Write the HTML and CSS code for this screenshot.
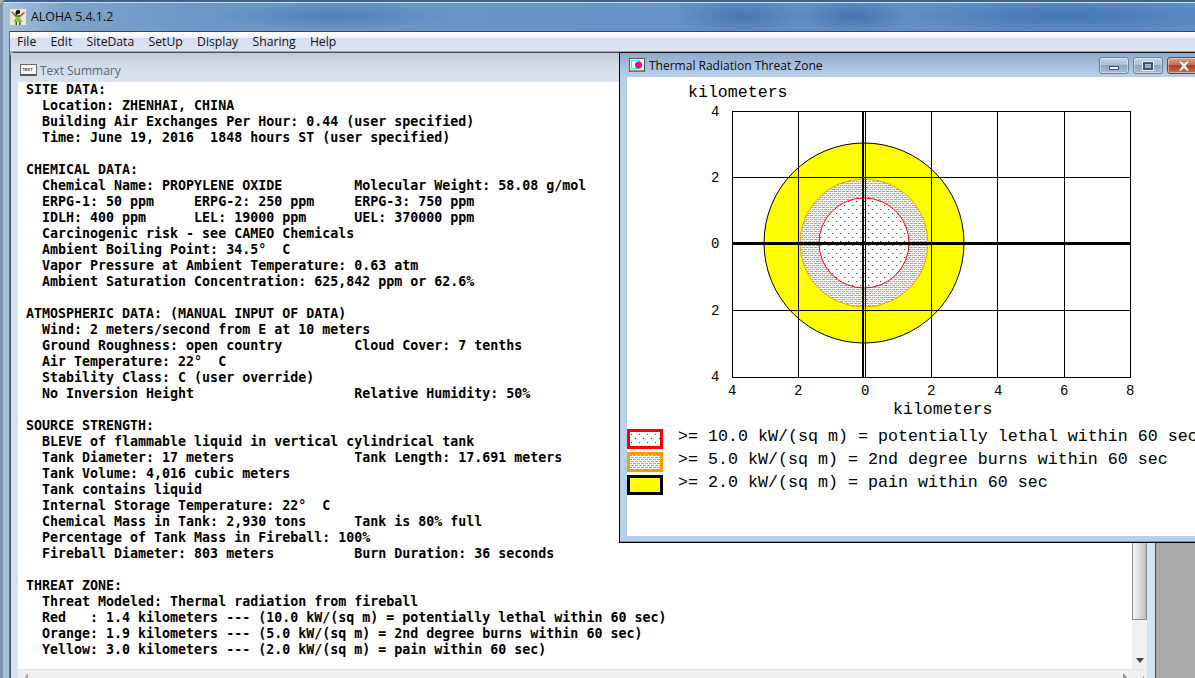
FILE: index.html
```html
<!DOCTYPE html>
<html lang="en">
<head>
<meta charset="utf-8">
<title>ALOHA 5.4.1.2</title>
<link rel="stylesheet" href="styles.css">
</head>
<body>
<div class="app">
  <header class="app-title">
    <svg class="hula" viewBox="0 0 16 16" width="16" height="16">
      <rect width="16" height="16" fill="#e6ebd2"/>
      <circle cx="8" cy="3" r="2.200" fill="#1d1a10"/>
      <rect x="5.500" y="3" width="1.500" height="4" fill="#1d1a10"/>
      <path d="M1 3 L2 2.500 L6 6 L10 6 L14 3 L15 4 L10 8.500 L6 8.500 Z" fill="#8a6a30"/>
      <path d="M3.500 13 L6 8.500 L10 8.500 L12.500 13 Z" fill="#7dc832"/>
      <rect x="5.500" y="13" width="1.500" height="3" fill="#6a4c18"/>
      <rect x="9" y="13" width="1.500" height="3" fill="#6a4c18"/>
    </svg>
    <span class="app-name">ALOHA 5.4.1.2</span>
  </header>
  <div class="app-body">
    <nav class="menu">
      <span>File</span><span>Edit</span><span>SiteData</span><span>SetUp</span><span>Display</span><span>Sharing</span><span>Help</span>
    </nav>
    <main class="mdi">
      <section class="text-win">
        <div class="text-title">
          <svg class="text-icon" viewBox="0 0 17 12" width="17" height="12">
            <rect x="0.500" y="0.500" width="16" height="10" fill="#f2f2f2" stroke="#6a6a6a"/>
            <rect x="1.500" y="1.500" width="14" height="7" fill="#fff"/>
            <text class="icon-label" x="2.500" y="6.500">TEXT</text>
            <rect x="0" y="10.500" width="17" height="1.500" fill="#555"/>
          </svg>
          <span>Text Summary</span>
        </div>
        <div class="text-client">
<pre class="report">SITE DATA:
  Location: ZHENHAI, CHINA
  Building Air Exchanges Per Hour: 0.44 (user specified)
  Time: June 19, 2016  1848 hours ST (user specified)

CHEMICAL DATA:
  Chemical Name: PROPYLENE OXIDE         Molecular Weight: 58.08 g/mol
  ERPG-1: 50 ppm     ERPG-2: 250 ppm     ERPG-3: 750 ppm
  IDLH: 400 ppm      LEL: 19000 ppm      UEL: 370000 ppm
  Carcinogenic risk - see CAMEO Chemicals
  Ambient Boiling Point: 34.5°  C
  Vapor Pressure at Ambient Temperature: 0.63 atm
  Ambient Saturation Concentration: 625,842 ppm or 62.6%

ATMOSPHERIC DATA: (MANUAL INPUT OF DATA)
  Wind: 2 meters/second from E at 10 meters
  Ground Roughness: open country         Cloud Cover: 7 tenths
  Air Temperature: 22°  C
  Stability Class: C (user override)
  No Inversion Height                    Relative Humidity: 50%

SOURCE STRENGTH:
  BLEVE of flammable liquid in vertical cylindrical tank
  Tank Diameter: 17 meters               Tank Length: 17.691 meters
  Tank Volume: 4,016 cubic meters
  Tank contains liquid
  Internal Storage Temperature: 22°  C
  Chemical Mass in Tank: 2,930 tons      Tank is 80% full
  Percentage of Tank Mass in Fireball: 100%
  Fireball Diameter: 803 meters          Burn Duration: 36 seconds

THREAT ZONE:
  Threat Modeled: Thermal radiation from fireball
  Red   : 1.4 kilometers --- (10.0 kW/(sq m) = potentially lethal within 60 sec)
  Orange: 1.9 kilometers --- (5.0 kW/(sq m) = 2nd degree burns within 60 sec)
  Yellow: 3.0 kilometers --- (2.0 kW/(sq m) = pain within 60 sec)</pre>
          <div class="vscroll">
            <div class="vthumb"></div>
            <div class="varrow"></div>
          </div>
        </div>
        <div class="hscroll"><i class="harrow-l"></i><i class="harrow-r"></i><i class="grip"></i></div>
      </section>

      <section class="zone-win">
        <div class="zone-title">
          <svg class="zone-icon" viewBox="0 0 16 16" width="16" height="16">
            <rect x="0.500" y="1.500" width="15" height="13" fill="#f4f4f4" stroke="#555"/>
            <rect x="2.500" y="3.500" width="8" height="8" fill="#fff" stroke="#2ee"/>
            <circle cx="9.500" cy="8" r="3.500" fill="#f0068c"/>
            <rect x="1" y="13" width="14" height="1.500" fill="#b08a60"/>
          </svg>
          <span class="zone-name">Thermal Radiation Threat Zone</span>
          <div class="controls">
            <div class="ctl ctl-min"><i></i></div>
            <div class="ctl ctl-max"><i></i></div>
            <div class="ctl ctl-close">
              <svg viewBox="0 0 14 10" width="14" height="10"><path d="M1 0 H4.500 L7 2.500 L9.500 0 H13 L9 5 L13 10 H9.500 L7 7.500 L4.500 10 H1 L5 5 Z" fill="#f4efee" stroke="#6e4a44" stroke-width="0.600"/></svg>
            </div>
          </div>
        </div>
        <div class="zone-client">
          <svg class="chart" width="568" height="345" viewBox="627 77 568 345">
            <defs>
              <pattern id="dotsRed" width="8" height="8" patternUnits="userSpaceOnUse" patternTransform="translate(0 1)">
                <rect width="8" height="8" fill="#fff"/>
                <rect x="0" y="0" width="1" height="1" fill="#f00"/>
                <rect x="4" y="4" width="1" height="1" fill="#f00"/>
              </pattern>
              <pattern id="dotsOrange" width="4" height="4" patternUnits="userSpaceOnUse" patternTransform="translate(0 1)">
                <rect width="4" height="4" fill="#fff"/>
                <rect x="0" y="0" width="2" height="1" fill="#ff9a00"/>
                <rect x="2" y="2" width="2" height="1" fill="#ff9a00"/>
                <rect x="0" y="2" width="1" height="1" fill="#ff9a00"/>
                <rect x="2" y="0" width="1" height="1" fill="#ff9a00"/>
              </pattern>
            </defs>
            <circle cx="864" cy="243" r="100" fill="#ff0" stroke="#000"/>
            <circle cx="864" cy="243" r="64" fill="url(#dotsOrange)" stroke="#ff9a00"/>
            <circle cx="864" cy="243" r="45" fill="url(#dotsRed)" stroke="#f00"/>
            <g class="grid">
              <rect x="732.500" y="111.500" width="398" height="266"/>
              <path d="M798.500 111V377 M931.500 111V377 M997.500 111V377 M1064.500 111V377 M732 177.500H1130 M732 310.500H1130"/>
            </g>
            <rect class="axis" x="862" y="111" width="2" height="266"/>
            <rect class="axis" x="865" y="111" width="1" height="266"/>
            <rect class="axis" x="732" y="242" width="399" height="3"/>
            <text class="axis-name" x="688" y="97">kilometers</text>
            <text class="axis-name" x="893" y="414">kilometers</text>
            <text class="tick" x="711" y="116">4</text>
            <text class="tick" x="711" y="182">2</text>
            <text class="tick" x="711" y="248">0</text>
            <text class="tick" x="711" y="315">2</text>
            <text class="tick" x="711" y="381">4</text>
            <text class="tick" x="728" y="395">4</text>
            <text class="tick" x="794" y="395">2</text>
            <text class="tick" x="861" y="395">0</text>
            <text class="tick" x="927" y="395">2</text>
            <text class="tick" x="994" y="395">4</text>
            <text class="tick" x="1060" y="395">6</text>
            <text class="tick" x="1126" y="395">8</text>
          </svg>
          <ul class="legend">
            <li><svg class="swatch" width="36" height="20"><rect x="1.500" y="1.500" width="33" height="17" fill="url(#dotsRed)" stroke="#f00" stroke-width="3"/></svg><span>&gt;= 10.0 kW/(sq m) = potentially lethal within 60 sec</span></li>
            <li><svg class="swatch" width="36" height="20"><rect x="1.500" y="1.500" width="33" height="17" fill="url(#dotsOrange)" stroke="#ff9a00" stroke-width="3"/></svg><span>&gt;= 5.0 kW/(sq m) = 2nd degree burns within 60 sec</span></li>
            <li><svg class="swatch" width="36" height="20"><rect x="1.500" y="1.500" width="33" height="17" fill="#ff0" stroke="#000" stroke-width="3"/></svg><span>&gt;= 2.0 kW/(sq m) = pain within 60 sec</span></li>
          </ul>
        </div>
      </section>
    </main>
  </div>
</div>
</body>
</html>
```

FILE: styles.css
```css
* { box-sizing: border-box; }
html, body { margin: 0; padding: 0; }
body {
  width: 1195px;
  height: 678px;
  overflow: hidden;
  background: #a8b89a;
  font-family: "Open Sans", "Noto Sans", "Liberation Sans", sans-serif;
}
.app {
  width: 1195px;
  height: 678px;
  display: flex;
  flex-direction: column;
  border-top: 2px solid #3f5f96;
  border-left: 3px solid #7e93ab;
  border-top-left-radius: 6px;
  background:
    radial-gradient(ellipse 70px 20px at 740px 14px, #4a78b4 0, rgba(74,120,180,0) 100%),
    radial-gradient(ellipse 60px 18px at 850px 14px, #4474b0 0, rgba(68,116,176,0) 100%),
    radial-gradient(ellipse 170px 18px at 1060px 14px, #4578b4 0, rgba(69,120,180,0) 100%),
    radial-gradient(ellipse 120px 14px at 330px 14px, #4f80ba 0, rgba(79,128,186,0) 100%),
    linear-gradient(90deg, #a8c2d8 0, #7ea3c8 60px, #6c97c8 200px, #5f8dc6 100%);
}
.app-title {
  height: 29px;
  flex: none;
  display: flex;
  align-items: center;
  gap: 5px;
  padding: 0 0 1px 7px;
  border-top: 1px solid #cfe0f2;
}
.hula { display: block; }
.app-name {
  font-size: 12.4px;
  color: #0c0c0c;
  line-height: 16px;
}
.app-body {
  flex: 1;
  min-height: 0;
  margin-left: 6px;
  display: flex;
  flex-direction: column;
  border-left: 1px solid #5a6a7c;
  border-top: 1px solid #39495c;
}
.menu {
  height: 20px;
  flex: none;
  display: flex;
  gap: 14.3px;
  padding: 0 0 0 7px;
  align-items: center;
  font-size: 12.2px;
  color: #111;
  background: linear-gradient(#ffffff 0, #f2f4fb 30%, #d9dff0 32%, #dde2f2 100%);
  border-bottom: 1px solid #a0a0a8;
}
.mdi {
  position: relative;
  flex: 1;
  min-height: 0;
  background: #ababab;
}
.text-win {
  position: absolute;
  left: 0;
  top: 0;
  width: 1146px;
  height: 632px;
  display: flex;
  flex-direction: column;
  background: #d6e3f3;
  border-left: 1px solid #4a5058;
  border-top: 1px solid #4a5058;
  border-right: 1px solid #4a5058;
  border-top-left-radius: 5px;
  padding: 0 8px 0 7px;
}
.text-title {
  height: 29px;
  flex: none;
  margin: 0 -8px 0 -7px;
  padding: 5px 0 0 9px;
  display: flex;
  align-items: center;
  gap: 3px;
  font-size: 12px;
  color: #56697e;
  background: linear-gradient(#c2cad4 0, #d3dbe5 40%, #dae4f0 100%);
}
.text-icon { display: block; }
.icon-label {
  font-family: "Liberation Sans", sans-serif;
  font-size: 4px;
  font-weight: 700;
  fill: #333;
}
.text-client {
  flex: 1;
  min-height: 0;
  display: flex;
  background: #fff;
  justify-content: space-between;
}
.report {
  margin: 0;
  padding: 0 0 0 8px;
  font-family: "DejaVu Sans Mono", "Liberation Mono", monospace;
  font-weight: 700;
  font-size: 13.3px;
  line-height: 16px;
  color: #000;
}
.vscroll {
  position: relative;
  width: 15px;
  flex: none;
  background: #f0f0f0;
}
.vthumb {
  height: 538px;
  background: linear-gradient(90deg, #f4f4f4 0, #dcdcdc 50%, #bcbcbc 100%);
  border: 1px solid #8e8f8f;
  border-top: 0;
}
.varrow {
  position: absolute;
  left: 4px;
  bottom: 6px;
  width: 0;
  height: 0;
  border-left: 4px solid transparent;
  border-right: 4px solid transparent;
  border-top: 5px solid #444;
}
.hscroll {
  position: relative;
  height: 15px;
  flex: none;
  background: #efefef;
  border-top: 1px solid #e4e4e4;
}
.harrow-l {
  position: absolute;
  left: 7px;
  top: 3px;
  border-top: 4px solid transparent;
  border-bottom: 4px solid transparent;
  border-right: 3px solid #aaa;
}
.harrow-r {
  position: absolute;
  right: 20px;
  top: 3px;
  border-top: 4px solid transparent;
  border-bottom: 4px solid transparent;
  border-left: 4px solid #999;
}
.grip {
  position: absolute;
  right: 3px;
  top: 6px;
  width: 1px;
  height: 2px;
  background: #aaa;
}
.zone-win {
  position: absolute;
  left: 609px;
  top: 0;
  width: 590px;
  height: 491px;
  display: flex;
  flex-direction: column;
  border-left: 1px solid #000;
  border-top: 1px solid #111;
  border-bottom: 1px solid #000;
  background: #b9d0ea;
  padding: 0 0 6px 7px;
  box-shadow: inset 0 -1px 0 #2fb6cf;
}
.zone-title {
  height: 24px;
  flex: none;
  margin-left: -7px;
  padding: 0 0 0 9px;
  display: flex;
  align-items: center;
  gap: 4px;
  background: linear-gradient(#8fabc9 0, #a5bedb 50%, #b9d0ea 100%);
}
.zone-icon { display: block; }
.zone-name {
  font-size: 12px;
  color: #0a0a14;
}
.controls {
  margin-left: auto;
  display: flex;
  gap: 4px;
  align-self: flex-start;
  padding-top: 4px;
  padding-right: 9px;
}
.ctl {
  height: 17px;
  display: flex;
  align-items: center;
  justify-content: center;
  border: 1px solid #6f7f92;
  border-radius: 3px;
  background: linear-gradient(#c7d6e8 0, #a9bfd8 45%, #8ba5c4 50%, #a6bdd7 100%);
  box-shadow: inset 0 0 0 1px rgba(255,255,255,0.45);
}
.ctl-min { width: 30px; align-items: flex-end; padding-bottom: 3px; }
.ctl-min i {
  display: block;
  width: 10px;
  height: 4px;
  background: #eef2f7;
  border: 1px solid #47556a;
}
.ctl-max { width: 30px; }
.ctl-max i {
  display: block;
  width: 10px;
  height: 8px;
  background: transparent;
  border: 2px solid #47556a;
  box-shadow: 0 0 0 1px #eef2f7;
}
.ctl-close {
  width: 33px;
  border-color: #7a3a30;
  background: linear-gradient(#dd9a8c 0, #cf6f5d 45%, #b73a26 50%, #c76a56 100%);
}
.ctl-close svg { display: block; }
.zone-client {
  flex: 1;
  min-height: 0;
  background: #fff;
  display: flex;
  flex-direction: column;
}
.chart { display: block; flex: none; }
.grid { fill: none; stroke: #000; stroke-width: 1; shape-rendering: crispEdges; }
.axis { fill: #000; shape-rendering: crispEdges; }
.axis-name {
  font-family: "Liberation Mono", monospace;
  font-size: 16.6px;
  fill: #000;
}
.tick {
  font-family: "Liberation Mono", monospace;
  font-size: 14px;
  fill: #000;
}
.legend {
  list-style: none;
  margin: 7px 0 0;
  padding: 0;
  display: flex;
  flex-direction: column;
  gap: 3px;
}
.legend li {
  display: flex;
  align-items: flex-start;
  height: 20px;
  white-space: nowrap;
  font-family: "Liberation Mono", monospace;
  font-size: 16.67px;
  line-height: 16px;
  color: #000;
}
.swatch { display: block; flex: none; margin-right: 15px; }
```
